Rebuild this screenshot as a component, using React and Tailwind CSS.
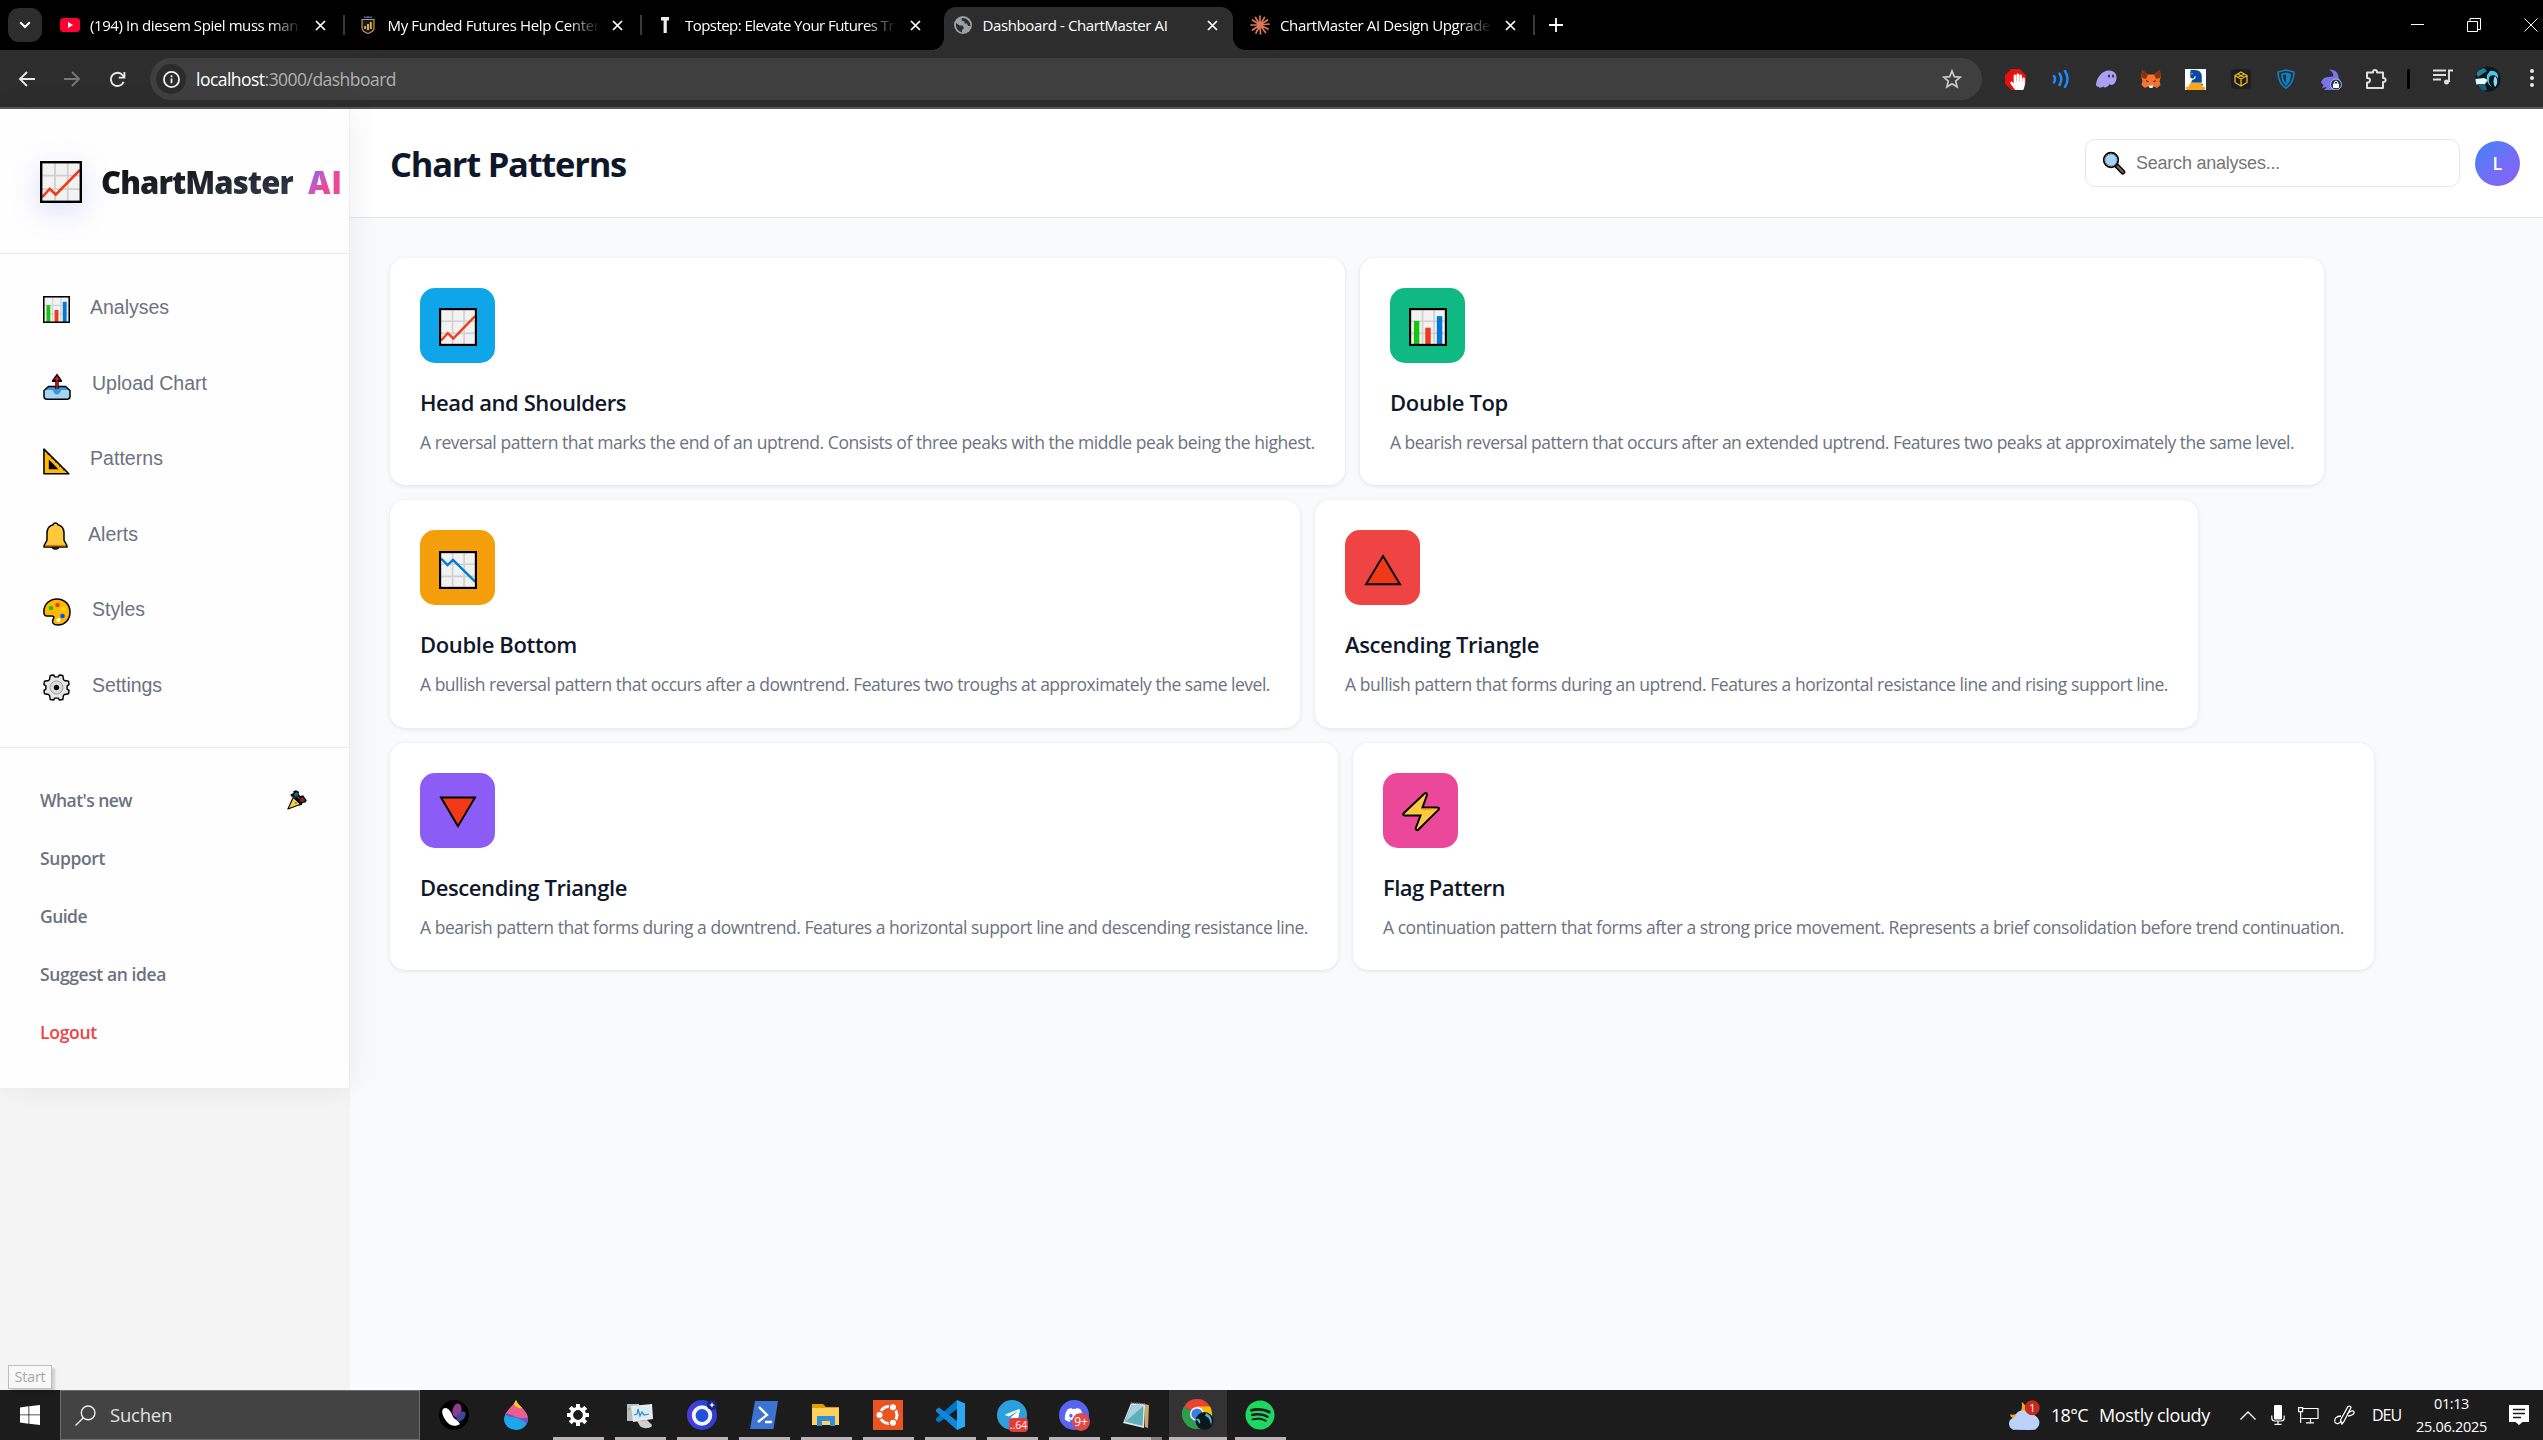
import React, { useLayoutEffect, useRef, useState } from "react";
import { FaDiscord, FaSpotify, FaTelegramPlane, FaHandPaper, FaChessKnight } from "react-icons/fa";

/* Text whose letter spacing is adjusted so that the line takes exactly `w` pixels. */
function Fit({ w, className = "", children }) {
  const ref = useRef(null);
  const [ls, setLs] = useState(0);
  useLayoutEffect(() => {
    const el = ref.current;
    el.style.letterSpacing = "0px";
    const natural = el.getBoundingClientRect().width;
    const n = el.textContent.length;
    setLs((w - natural) / n);
  }, [w]);
  return (
    <span ref={ref} className={"inline-block whitespace-pre " + className} style={{ letterSpacing: ls + "px" }}>
      {children}
    </span>
  );
}

/* ---------- emoji-style drawings ---------- */
const Grid = () => (
  <>
    <rect x="1" y="1" width="26" height="26" fill="#f2f2f2" />
    <path d="M10 1v26M18.5 1v26M1 9.8h26M1 18.7h26" stroke="#d0d0d0" strokeWidth="1.2" />
  </>
);
const Frame = () => <rect x="0.8" y="0.8" width="26.4" height="26.4" fill="none" stroke="#000" strokeWidth="1.6" />;

const ChartUp = ({ className }) => (
  <svg viewBox="0 0 28 28" className={className}>
    <Grid />
    <path d="M1.6 24 6.5 18.5l4 4L26.6 6" fill="none" stroke="#f03a17" strokeWidth="1.7" />
    <Frame />
  </svg>
);
const ChartDown = ({ className }) => (
  <svg viewBox="0 0 28 28" className={className}>
    <Grid />
    <path d="M1.6 5.6 6.3 10.4l4-3.8L26.6 22.6" fill="none" stroke="#0078d7" strokeWidth="1.7" />
    <Frame />
  </svg>
);
const Bars = ({ className }) => (
  <svg viewBox="0 0 28 28" className={className}>
    <Grid />
    <path d="M3.6 9.5h4V27h-4z" fill="#16c60c" />
    <path d="M12 14.5h4V27h-4z" fill="#f03a17" />
    <path d="M20.5 6h4v21h-4z" fill="#0078d7" />
    <Frame />
  </svg>
);
const Upload = ({ className }) => (
  <svg viewBox="0 0 28 28" className={className}>
    <path d="M5.5 13.5h17l4.500 4v5.800a3 3 0 0 1-3 3h-20a3 3 0 0 1-3-3v-5.800z" fill="#a9d3f2" />
    <path d="M5.5 13.5h17l4.500 3.500H18.500c-1 0-1 4.500-4.500 4.500s-3.500-4.500-4.500-4.500H1z" fill="#3a96dd" />
    <path d="M5.5 13.500h17l4.500 4v5.800a3 3 0 0 1-3 3H4a3 3 0 0 1-3-3v-5.800z" fill="none" stroke="#000" strokeWidth="1.5" />
    <path d="M14 .5 9.100 7.300v1.700h3.200v7h3.400V9h3.200V7.300z" fill="#000" />
    <path d="M14 2.800 11.3 7h1.900v9h1.600V7h1.900z" fill="#e81224" />
  </svg>
);
const Ruler = ({ className }) => (
  <svg viewBox="0 0 28 28" className={className}>
    <path d="M1 1.200v25.500h25.800z" fill="#ffb900" stroke="#000" strokeWidth="1.6" strokeLinejoin="round" />
    <path d="M6 12v10h10z" fill="#000" />
    <path d="M5 7l1.500-1.500M9 11l1.500-1.500M13 15l1.500-1.500M17 19l1.500-1.500M21 23l1.500-1.500" stroke="#000" strokeWidth="1.2" />
  </svg>
);
const Bell = ({ className }) => (
  <svg viewBox="0 0 25 28" className={className}>
    <path d="M9 24h7c0 4-7 4-7 0z" fill="#8e562e" stroke="#000" strokeWidth="1.3" />
    <path
      d="M12.500 1c1.500 0 2.100.8 2.500 1.800 4 1 6 4.300 6 8.500V18c0 1.500 3 3.500 3 7H1c0-3.500 3-5.500 3-7v-6.700c0-4.200 2-7.500 6-8.500.4-1 1-1.800 2.500-1.800z"
      fill="#ffc83d"
      stroke="#000"
      strokeWidth="1.5"
    />
    <path d="M2 23.600h21" stroke="#d67d00" strokeWidth="1.4" />
  </svg>
);
const Palette = ({ className }) => (
  <svg viewBox="0 0 28 28" className={className}>
    <path
      d="M14 .9c7.500 0 13 5.600 13 13S22 27 15 27c-5 0-6.500-3-5-5.500 1.300-2.200 1.300-3.500-1-3.500H3.500C1.500 18 .9 16 .9 13.500.9 6.500 6.500.9 14 .9z"
      fill="#ffb900"
      stroke="#000"
      strokeWidth="1.5"
    />
    <circle cx="8" cy="10" r="2.3" fill="#16c60c" />
    <circle cx="14.5" cy="7" r="2.3" fill="#f03a17" />
    <circle cx="20.5" cy="11" r="2.3" fill="#ffdb00" />
    <circle cx="19.5" cy="18" r="2.3" fill="#0052f0" />
    <circle cx="15.5" cy="22" r="2" fill="#fff" />
  </svg>
);
const GearEmoji = ({ className }) => (
  <svg viewBox="0 0 28 28" className={className}>
    <path
      d="M7.500 1.500 11 1l1.200 2h3.600L17 1l3.500.5.700 4.200 1.100 1.100 4.200.7.500 3.500-2 1.200v3.600l2 1.200-.5 3.500-4.200.7-1.100 1.100-.7 4.200L17 27l-1.200-2h-3.600L11 27l-3.500-.5-.7-4.200-1.100-1.100-4.200-.7L1 17l2-1.200v-3.600L1 11l.5-3.500 4.200-.7 1.100-1.100z"
      fill="#e6e6e6"
      stroke="#000"
      strokeWidth="1.5"
      strokeLinejoin="round"
    />
    <circle cx="14" cy="14" r="6.700" fill="#dcdcdc" stroke="#9a9a9a" strokeWidth="1" />
    <circle cx="14" cy="14" r="2.800" fill="#000" />
  </svg>
);
const Party = ({ className }) => (
  <svg viewBox="0 0 20 20" className={className}>
    <path d="M3.500 4.500 6.500 3l-.3-1.700L9 .3l3 1.500-.3 2.200L13.200 6l3-.8 1.300 2 2.300 3-1.300 2.300-3 .5L15 15l-3 .5-5-8.500-3-.5z" fill="#0a0a0a" />
    <path d="M7 4.200 9.300 2l2 1.700-.8 2.500-2.800.6z" fill="#12687d" />
    <path d="M13 8.500l3-1.500 2.500 3.500-3 1.500-2.500-.7z" fill="#8f1f1f" />
    <path d="M10.500 6.500l2 2" stroke="#5b3fb0" strokeWidth="1.2" />
    <path d="M.9 19 6.300 7.300l7.500 7z" fill="#ffc83d" stroke="#000" strokeWidth="1.1" strokeLinejoin="round" />
    <circle cx="8.8" cy="13" r="1" fill="#00b7a8" />
  </svg>
);
const TriUp = ({ className }) => (
  <svg viewBox="0 0 38 38" className={className}>
    <path d="M19 5 36 33.200H2z" fill="#f03a17" stroke="#000" strokeWidth="1.9" />
  </svg>
);
const TriDown = ({ className }) => (
  <svg viewBox="0 0 38 38" className={className}>
    <path d="M19 33.200 2 4.500h34z" fill="#f03a17" stroke="#000" strokeWidth="1.9" />
  </svg>
);
const Bolt = ({ className }) => (
  <svg viewBox="0 0 38 38" className={className}>
    <path
      d="M22.500.5c1.500-1 3 0 2.500 1.500L20.500 14.500h15c1.800 0 2 1.500.8 2.400L16.500 36.500c-1.500 1.300-3.200.3-2.700-1.500l4.700-12.500H2.700c-1.800 0-2-1.500-.8-2.500z"
      fill="#ffc83d"
      stroke="#000"
      strokeWidth="2"
    />
    <path d="M20 15.800h13" stroke="#d67d00" strokeWidth="1.3" />
  </svg>
);
const Lens = ({ className }) => (
  <svg viewBox="0 0 24 24" className={className}>
    <path d="M14.5 14.5 20.800 21" stroke="#000" strokeWidth="5" strokeLinecap="round" />
    <path d="M15.5 15.5 20.800 21" stroke="#666" strokeWidth="2.200" strokeLinecap="round" />
    <circle cx="9" cy="9" r="7.300" fill="#a5d2f5" stroke="#000" strokeWidth="1.700" />
    <circle cx="9" cy="9" r="5.800" fill="none" stroke="#8a9aa6" strokeWidth="1" />
  </svg>
);

/* ---------- browser chrome ---------- */
const X = ({ s = 11 }) => (
  <svg viewBox="0 0 11 11" width={s} height={s}>
    <path d="M1 1l9 9M10 1l-9 9" stroke="#fff" strokeWidth="1.700" />
  </svg>
);
const YouTube = () => (
  <svg viewBox="0 0 20 14" width="20" height="14">
    <rect width="20" height="14" rx="3.500" fill="#ff0033" />
    <path d="M8 4v6l5-3z" fill="#fff" />
  </svg>
);
const Shield = () => (
  <svg viewBox="0 0 14 18" width="14" height="18">
    <path d="M3 0l2 1L7 0l2 1 2-1v2H3z" fill="#2f6fd0" />
    <path d="M1 3.500h12V12c0 3-3 4.500-6 5.500C4 16.500 1 15 1 12z" fill="#17191f" stroke="#c9963c" strokeWidth="1.200" />
    <path d="M4.200 13v-3M7 14V8M9.800 13V6" stroke="#e6b04a" strokeWidth="1.900" />
  </svg>
);
const Topstep = () => (
  <svg viewBox="0 0 8 16" width="8" height="16">
    <path d="M0 0h8v3.500H5.800V16H2.600V3.500H0z" fill="#eee" />
  </svg>
);
const Globe = () => (
  <svg viewBox="0 0 18 18" width="18" height="18">
    <circle cx="9" cy="9" r="9" fill="#9aa0a6" />
    <path d="M2 7l3.500 2.500h3L10 12l-2 2v2.500A8 8 0 0 1 2 7zM8 2l-.5 2.500 3 1v2h2.500l1 2.500h2.500A8 8 0 0 0 8 2z" fill="#2d2d2d" />
  </svg>
);
const Burst = () => (
  <svg viewBox="0 0 20 20" width="20" height="20">
    <path
      d="M10 10V1M10 10l4.500-7.500M10 10l7.500-5M10 10l9-1M10 10l8 4M10 10l5.500 7.500M10 10l.5 9M10 10l-4 8M10 10l-7.500 5M10 10H1M10 10L2.500 5M10 10L5.500 2.500"
      stroke="#d97757"
      strokeWidth="1.700"
      strokeLinecap="round"
    />
  </svg>
);

const tabs = [
  { icon: <YouTube />, text: "(194) In diesem Spiel muss man", w: 208, fade: true, line: true },
  { icon: <Shield />, text: "My Funded Futures Help Center", w: 212, fade: true, line: true },
  { icon: <Topstep />, text: "Topstep: Elevate Your Futures Tr", w: 209, fade: true },
  { icon: <Globe />, text: "Dashboard - ChartMaster AI", w: 185, active: true },
  { icon: <Burst />, text: "ChartMaster AI Design Upgrade", w: 210, fade: true, line: true },
];

function Tab({ t }) {
  return (
    <div className="relative flex h-[50px] w-[297.5px] shrink-0 items-center">
      {t.active && (
        <div className="absolute top-[7px] bottom-0 left-[4px] right-[4px] rounded-t-[12px] bg-[#2d2d2d]">
          <div className="absolute bottom-0 -left-[12px] size-[12px] bg-[radial-gradient(circle_at_0_0,transparent_11.5px,#2d2d2d_12px)]" />
          <div className="absolute bottom-0 -right-[12px] size-[12px] bg-[radial-gradient(circle_at_100%_0,transparent_11.5px,#2d2d2d_12px)]" />
        </div>
      )}
      <div className="relative ml-[13px] flex w-5 justify-center">{t.icon}</div>
      <div
        className={
          "relative ml-[10px] w-[214px] text-[15px] leading-6 text-white " +
          (t.fade ? "[mask-image:linear-gradient(to_right,#000_84%,transparent_99%)]" : "")
        }
      >
        <Fit w={t.w}>{t.text}</Fit>
      </div>
      <div className="relative ml-[10px] flex w-3 justify-center">
        <X />
      </div>
      {t.line && <div className="absolute right-0 h-5 w-[2px] bg-[#3a3a3a]" />}
    </div>
  );
}

const extensions = [
  <svg viewBox="0 0 20 20" width="21" height="21">
    <path d="M6 0h8l6 6v8l-6 6H6l-6-6V6z" fill="#e8110f" />
    <FaHandPaper x="4" y="4" width="12" height="12" color="#fff" />
  </svg>,
  <svg viewBox="0 0 18 18" width="18" height="18" fill="none" stroke="#1a8cff" strokeWidth="2.500" strokeLinecap="round">
    <path d="M2 6q2 3 0 6.500M7.500 3.500q3.500 5.500 0 11.500M13 1q5 8 0 16" />
  </svg>,
  <svg viewBox="0 0 22 18" width="22" height="18">
    <path
      d="M1 14C2 7 7 .5 14 .5c5 0 7.500 3 7.500 7 0 4.500-2.500 7.500-5 7.500-1.500 0-2-1-2-1-1 2-3 3.500-4.500 3.500-1.500 0-1.500-1.300-1.500-1.300S7 17.700 5 17.700c-1.300 0-1.500-1.200-1.500-1.200S1 17.500 1 14z"
      fill="#ab9ff2"
    />
    <ellipse cx="14" cy="6" rx="1" ry="1.500" fill="#2d2d2d" />
    <ellipse cx="18" cy="6" rx="1" ry="1.500" fill="#2d2d2d" />
  </svg>,
  <svg viewBox="0 0 20 19" width="20" height="21">
    <path d="M1 0l6 4.500h6L19 0l.5 8-1 3 1 4-3.500 3-3-1.500h-6L4 18 .5 15l1-4-1-3z" fill="#f6752c" />
    <path d="M1 0l6 4.500L5 9 1 8zM19 0l-6 4.500L15 9l4-1z" fill="#8c3212" />
    <path d="M5 10l3 1.500-2 .8zM15 10l-3 1.500 2 .8z" fill="#222" />
    <path d="M7.500 15.500h5l-1 2.500h-3z" fill="#eee" />
  </svg>,
  <svg viewBox="0 0 20 20" width="21" height="21">
    <rect width="20" height="20" fill="#fff" />
    <FaChessKnight x="3" y="0" width="14" height="16" color="#0b4a9e" />
    <path d="M5 13h10l1.500 4H19v3H1v-3h2.500z" fill="#f8a71b" />
  </svg>,
  <svg viewBox="0 0 20 20" width="20" height="20">
    <rect width="20" height="20" rx="4" fill="#1b1e25" />
    <path d="M10 3l6 3.500v7L10 17l-6-3.500v-7zM4 6.500l6 3.500 6-3.500M10 10v7M7 5l6 3.500M13 5L7 8.500" fill="none" stroke="#f0b90b" strokeWidth="1.300" />
  </svg>,
  <svg viewBox="0 0 18 20" width="18" height="20" fill="none" stroke="#0b84c6">
    <path d="M9 1l8 2c0 8-2 12.500-8 16C3 15.500 1 11 1 3z" strokeWidth="1.600" />
    <path d="M9 4.500l4 1c0 5-1 7.500-4 10-3-2.500-4-5-4-10z" strokeWidth="1.800" />
    <path d="M9 4.500v11c3-2.500 4-5 4-10z" fill="#0b84c6" stroke="none" />
  </svg>,
  <svg viewBox="0 0 21 21" width="21" height="21">
    <path d="M8 .5c6-.5 10 4 9.500 8L20 13l-4 8H3l3-3-5 1 1.500-3L0 13.500C1.500 8.500 5 8 12 7.500 13 5 11 2.500 8 .5z" fill="#7b74e8" />
    <circle cx="15" cy="15.500" r="5.500" fill="#2b3550" stroke="#cfd3ea" strokeWidth=".8" />
    <rect x="12" y="14.500" width="6" height="4.500" rx=".8" fill="#fff" />
    <path d="M13.500 14.500V13q1.500-2 3 0v1.500" fill="none" stroke="#fff" strokeWidth="1" />
  </svg>,
  <svg viewBox="0 0 22 22" width="22" height="22" fill="none" stroke="#dedede" strokeWidth="2">
    <path d="M2 4.500h6C7.500 1 12.500 1 12 4.500h6V10c3.500-.5 3.500 4.500 0 4v6H2v-5.500c4 .5 4-5 0-4.500z" strokeLinejoin="round" />
  </svg>,
];

function Browser() {
  return (
    <div className="h-[109px] w-full shrink-0">
      <div className="flex h-[50px] items-center bg-black pl-2">
        <div className="mr-[5px] flex size-[34px] shrink-0 items-center justify-center rounded-[11px] bg-[#2d2d2d]">
          <svg viewBox="0 0 12 8" width="12" height="8">
            <path d="M1.200 1.200 6 6l4.800-4.800" fill="none" stroke="#fff" strokeWidth="2" />
          </svg>
        </div>
        {tabs.map((t) => (
          <Tab key={t.text} t={t} />
        ))}
        <svg viewBox="0 0 14 14" width="14" height="14" className="ml-[14px]">
          <path d="M7 0v14M0 7h14" stroke="#fff" strokeWidth="1.800" />
        </svg>
        <div className="ml-auto flex items-center gap-[43px] pr-[5px]">
          <svg viewBox="0 0 13 13" width="13" height="13">
            <path d="M0 5.500h13" stroke="#fff" />
          </svg>
          <svg viewBox="0 0 14 14" width="14" height="14" fill="none" stroke="#fff">
            <path d="M.5 3.500h10v10H.5zM3 3.500V.5h10.500v11H10.500" />
          </svg>
          <svg viewBox="0 0 14 14" width="14" height="14">
            <path d="M.5.5l13 13M13.500.5l-13 13" stroke="#fff" />
          </svg>
        </div>
      </div>
      <div className="flex h-[59px] items-center border-b-2 border-[#5a5757] bg-[#2d2d2d] pt-px pl-[18px]">
        <svg viewBox="0 0 18 16" width="18" height="16" fill="none" stroke="#e8e8e8" strokeWidth="1.900">
          <path d="M17 8H2M9 1L2 8l7 7" />
        </svg>
        <svg viewBox="0 0 18 16" width="18" height="16" className="ml-[27px]" fill="none" stroke="#777" strokeWidth="1.900">
          <path d="M1 8h15M9 1l7 7-7 7" />
        </svg>
        <svg viewBox="0 0 18 18" width="17" height="17" className="ml-[28px]" fill="none" stroke="#e8e8e8" strokeWidth="2">
          <path d="M15.500 11.500A7 7 0 1 1 14.500 4.500L16 6.500M16.300 1v6h-6" />
        </svg>
        <div className="ml-[24px] flex h-[42px] w-[1832px] shrink-0 items-center rounded-full bg-[#3f3f3f] pr-5 pl-[6px]">
          <div className="flex size-[30px] items-center justify-center rounded-full bg-[#2b2b2b]">
            <svg viewBox="0 0 18 18" width="17" height="17" fill="none" stroke="#f1f1f1" strokeWidth="1.900">
              <circle cx="9" cy="9" r="8" />
              <path d="M9 8v5M9 4.500v2" />
            </svg>
          </div>
          <div className="ml-[10px] text-[17.5px] leading-7 text-[#b0b0b0]">
            <Fit w={200}>
              <span className="text-white">localhost</span>:3000/dashboard
            </Fit>
          </div>
          <svg viewBox="0 0 20 20" width="20" height="20" className="ml-auto" fill="none" stroke="#c9c9c9" strokeWidth="1.700">
            <path d="M10 2l2.300 5.600 6 .5-4.600 3.900 1.400 5.900-5.100-3.200-5.100 3.200 1.400-5.900L1.700 8.100l6-.5z" />
          </svg>
        </div>
        <div className="ml-[11px] flex shrink-0">
          {extensions.map((e, i) => (
            <div key={i} className="flex w-[45.1px] items-center justify-center">
              {e}
            </div>
          ))}
        </div>
        <div className="ml-[8px] h-5 w-[3px] rounded bg-black" />
        <svg viewBox="0 0 20 16" width="20" height="16" className="mb-1 ml-[23px]" fill="none" stroke="#dedede" strokeWidth="1.900">
          <path d="M0 1.500h13M0 6h13M0 10.500h8M20 1.500h-4V13" />
          <circle cx="13.500" cy="13" r="2.500" fill="#dedede" stroke="none" />
        </svg>
        <svg viewBox="0 0 26 26" width="26" height="26" className="ml-[22px]">
          <defs>
            <clipPath id="avatar">
              <circle cx="13" cy="13" r="12.600" />
            </clipPath>
          </defs>
          <g clipPath="url(#avatar)">
            <rect width="26" height="26" fill="#0b171c" />
            <path d="M0 6l9-4 3 3-9 6z" fill="#2a7f97" />
            <path d="M0 13l9-1 4 2-3 4-9 1z" fill="#e9f6f8" />
            <path d="M2 18l8 0 2 6-5 1z" fill="#1c5f73" />
            <path d="M15 5c6-1 9 3 8 8-1-3-4-5-8-3-2 4-1 8 2 11-4-2-6-7-5-12z" fill="#4cc3df" />
            <path d="M20 10c3 3 3 8 0 11-2-3-2-8 0-11z" fill="#8fdbe9" />
          </g>
        </svg>
        <svg viewBox="0 0 4 18" width="4" height="18" className="mb-[2px] ml-[29px]" fill="#e8e8e8">
          <circle cx="2" cy="2" r="2" />
          <circle cx="2" cy="9" r="2" />
          <circle cx="2" cy="16" r="2" />
        </svg>
      </div>
    </div>
  );
}

/* ---------- application ---------- */
const nav = [
  { icon: <Bars className="mt-px size-[27px]" />, text: "Analyses", w: 79, ml: "ml-[20px]" },
  { icon: <Upload className="mt-1 size-[28px]" />, text: "Upload Chart", w: 115, ml: "ml-[21px] mt-px" },
  { icon: <Ruler className="mt-[3px] size-[27px]" />, text: "Patterns", w: 73, ml: "ml-[20px]" },
  { icon: <Bell className="h-[28px] w-[25px]" />, text: "Alerts", w: 50, ml: "ml-[20px]" },
  { icon: <Palette className="size-[28px]" />, text: "Styles", w: 53, ml: "ml-[21px]" },
  { icon: <GearEmoji className="size-[27px]" />, text: "Settings", w: 70, ml: "ml-[22px]" },
];

const links = [
  { text: "What's new", w: 92, icon: true },
  { text: "Support", w: 65 },
  { text: "Guide", w: 47 },
  { text: "Suggest an idea", w: 126 },
  { text: "Logout", w: 57, red: true },
];

function Sidebar() {
  return (
    <aside className="relative z-10 h-[979px] w-[350px] shrink-0 border-r border-[#ececee] bg-[#fefefe] shadow-[4px_0_30px_rgba(0,0,0,0.06)]">
      <div className="flex h-[145px] items-center border-b border-[#ececee] pt-[2px] pl-10">
        <ChartUp className="size-[42px] shrink-0 drop-shadow-[0_8px_14px_rgba(99,102,241,0.22)]" />
        <div className="ml-[19px] flex text-[31px] leading-10 font-extrabold">
          <div className="bg-linear-to-br from-[#0a0a0a] to-[#374151] bg-clip-text text-transparent">
            <Fit w={192}>ChartMaster</Fit>
          </div>
          <div className="ml-[15px] bg-linear-to-br from-[#8b5cf6] from-15% to-[#ec4899] to-55% bg-clip-text text-transparent">
            <Fit w={35}>AI</Fit>
          </div>
        </div>
      </div>
      <nav className="flex h-[494px] flex-col border-b border-[#ececee] pt-[15px] pl-[43px] font-['Liberation_Sans',sans-serif] text-[19.5px] text-[#6b7280]">
        {nav.map((n) => (
          <div key={n.text} className="flex h-[75.6px] items-center">
            <div className="mt-[5px] shrink-0">{n.icon}</div>
            <Fit w={n.w} className={n.ml + " leading-6"}>
              {n.text}
            </Fit>
          </div>
        ))}
      </nav>
      <div className="flex flex-col pt-[23px] pl-10">
        {links.map((l) => (
          <div
            key={l.text}
            className={"flex h-[58px] items-center text-[17.5px] font-semibold " + (l.red ? "text-[#ef4444]" : "text-[#6b7280]")}
          >
            <Fit w={l.w}>{l.text}</Fit>
            {l.icon && <Party className="mr-[42px] ml-auto size-5" />}
          </div>
        ))}
      </div>
    </aside>
  );
}

const rows = [
  [
    { title: "Head and Shoulders", tw: 206, w: 895, card: "w-[955px]", bg: "bg-[#0ea5e9]", icon: <ChartUp className="size-[38px]" />, text: "A reversal pattern that marks the end of an uptrend. Consists of three peaks with the middle peak being the highest." },
    { title: "Double Top", tw: 118, w: 904, card: "w-[964px]", bg: "bg-[#10b981]", icon: <Bars className="size-[38px]" />, text: "A bearish reversal pattern that occurs after an extended uptrend. Features two peaks at approximately the same level." },
  ],
  [
    { title: "Double Bottom", tw: 157, w: 850, card: "w-[910px]", bg: "bg-[#f59e0b]", icon: <ChartDown className="size-[38px]" />, text: "A bullish reversal pattern that occurs after a downtrend. Features two troughs at approximately the same level." },
    { title: "Ascending Triangle", tw: 194, w: 823, card: "w-[883px]", bg: "bg-[#ef4444]", icon: <TriUp className="size-[38px]" />, text: "A bullish pattern that forms during an uptrend. Features a horizontal resistance line and rising support line." },
  ],
  [
    { title: "Descending Triangle", tw: 207, w: 888, card: "w-[948px]", bg: "bg-[#8b5cf6]", icon: <TriDown className="size-[38px]" />, text: "A bearish pattern that forms during a downtrend. Features a horizontal support line and descending resistance line." },
    { title: "Flag Pattern", tw: 122, w: 961, card: "w-[1021px]", bg: "bg-[#ec4899]", icon: <Bolt className="size-[38px] overflow-visible" />, text: "A continuation pattern that forms after a strong price movement. Represents a brief consolidation before trend continuation." },
  ],
];

function Card({ c }) {
  return (
    <div className={"h-[227.5px] rounded-[15px] bg-white p-[30px] shadow-[0_1px_4px_rgba(0,0,0,0.1)] " + c.card}>
      <div className={"flex size-[75px] items-center justify-center rounded-[15px] pt-[4px] " + c.bg}>{c.icon}</div>
      <h3 className="mt-[24px] text-[22px] leading-[30px] font-semibold text-[#0f172a]">
        <Fit w={c.tw}>{c.title}</Fit>
      </h3>
      <p className="mt-[12px] text-[17.5px] leading-[27px] text-[#6b7280]">
        <Fit w={c.w}>{c.text}</Fit>
      </p>
    </div>
  );
}

function Main() {
  return (
    <main className="flex-1 bg-[#f9fafc]">
      <header className="flex h-[109px] items-center border-b border-[#e2e4e8] bg-white pr-[23px] pl-10">
        <h1 className="pt-[2px] text-[34.5px] leading-[44px] font-bold text-[#0f172a]">
          <Fit w={236}>Chart Patterns</Fit>
        </h1>
        <div className="ml-auto flex h-[48px] w-[375px] items-center rounded-[10px] border border-[#e5e7eb] bg-white pl-4">
          <Lens className="size-6" />
          <span className="ml-[10px] font-['Liberation_Sans',sans-serif] text-[18px] text-[#757575]">
            <Fit w={144}>Search analyses...</Fit>
          </span>
        </div>
        <div className="ml-[15px] flex size-[45px] items-center justify-center rounded-full bg-linear-to-br from-[#3b82f6] to-[#8b5cf6] text-[18px] font-semibold text-white">
          L
        </div>
      </header>
      <div className="flex flex-col gap-[15px] pt-[39.5px] pl-10">
        {rows.map((r, i) => (
          <div key={i} className="flex gap-[15px]">
            {r.map((c) => (
              <Card key={c.title} c={c} />
            ))}
          </div>
        ))}
      </div>
    </main>
  );
}

/* ---------- taskbar ---------- */
const Cog = () => {
  const a = [0, 45, 90, 135, 180, 225, 270, 315];
  return (
    <svg viewBox="0 0 24 24" width="24" height="24">
      {a.map((d) => (
        <rect key={d} x="10" y="1" width="4" height="6" fill="#fff" transform={`rotate(${d} 12 12)`} />
      ))}
      <circle cx="12" cy="12" r="6.500" fill="none" stroke="#fff" strokeWidth="3.200" />
    </svg>
  );
};

const apps = [
  {
    icon: (
      <svg viewBox="0 0 30 30" width="30" height="30">
        <circle cx="15" cy="15" r="15" fill="#000" />
        <ellipse cx="18" cy="10.500" rx="4.500" ry="7" fill="#8e3b94" transform="rotate(12 18 10.500)" />
        <ellipse cx="22" cy="16.500" rx="3.500" ry="6" fill="#3b459c" transform="rotate(40 22 16.500)" />
        <path d="M4 9c4-3 8 2 10 8 2 2 6 5 7 7-4 3-10 2-13-2C4 17 2 12 4 9z" fill="#fff" />
      </svg>
    ),
  },
  {
    icon: (
      <svg viewBox="0 0 24 30" width="24" height="30">
        <defs>
          <clipPath id="drop">
            <path d="M12 0c2 6 12 11 12 19a12 11 0 0 1-24 0C0 12 10 6 12 0z" />
          </clipPath>
        </defs>
        <g clipPath="url(#drop)">
          <rect width="24" height="30" fill="#1da7ea" />
          <path d="M0 13c6 8 12 0 24 12V8H0z" fill="#7b52c4" />
          <path d="M0 15C6 10 13 22 24 17V4H0z" fill="#ef5f8d" />
          <path d="M9 0c0 7 8 9 9 8V0z" fill="#ffcf00" />
        </g>
      </svg>
    ),
  },
  { icon: <Cog />, open: true },
  {
    icon: (
      <svg viewBox="0 0 28 28" width="28" height="28">
        <path d="M1 3h12v17H1z" fill="#b9bcbd" />
        <path d="M5 5l21-2 1 15-20 3z" fill="#e8ecee" />
        <path d="M7 7l17-1.500.7 10.500L8.500 18z" fill="#d7ecfb" />
        <path d="M8 14l3-1 1-5 2 7 2-4 2 3 5-1" fill="none" stroke="#3b86c4" strokeWidth="1.200" />
        <path d="M11 20l10-1 5 5c0 4-10 4-12 1z" fill="#cfcfcf" />
        <circle cx="3" cy="8" r="1" fill="#5c4" />
      </svg>
    ),
    open: true,
  },
  {
    icon: (
      <svg viewBox="0 0 30 30" width="30" height="30">
        <defs>
          <linearGradient id="ring" x1="0" x2="1">
            <stop offset="0" stopColor="#5a35e0" />
            <stop offset=".5" stopColor="#2548d8" />
            <stop offset="1" stopColor="#3a35d6" />
          </linearGradient>
        </defs>
        <circle cx="15" cy="15" r="15" fill="url(#ring)" />
        <circle cx="15" cy="15.500" r="8.300" fill="#2450d8" stroke="#f3f5ff" strokeWidth="3.800" />
        <circle cx="25" cy="5" r="5" fill="#1a237e" />
        <path d="M25 2l.8 2.200L28 5l-2.200.8L25 8l-.8-2.200L22 5l2.200-.8z" fill="#fff" />
      </svg>
    ),
    open: true,
  },
  {
    icon: (
      <svg viewBox="0 0 28 22" width="28" height="28">
        <path d="M5 -3h23l-4.500 28H0z" fill="#3b74d1" />
        <path d="M9 3l8 8-9 7M15 18h7" fill="none" stroke="#fff" strokeWidth="2.300" />
      </svg>
    ),
    open: true,
  },
  {
    icon: (
      <svg viewBox="0 0 28 24" width="28" height="24">
        <path d="M0 1h11l3 3h13v6H0z" fill="#e0a100" />
        <path d="M0 5h27v17H0z" fill="#ffd25e" />
        <path d="M5 23V13h18v10h-5v-5h-8v5z" fill="#2f8fdd" />
      </svg>
    ),
    open: true,
  },
  {
    icon: (
      <svg viewBox="0 0 30 30" width="30" height="30">
        <rect width="30" height="30" fill="#e95420" />
        <circle cx="15.500" cy="15" r="8.500" fill="none" stroke="#fff" strokeWidth="3" />
        <g fill="#fff" stroke="#e95420" strokeWidth="1.400">
          <circle cx="6.500" cy="15" r="3.700" />
          <circle cx="20" cy="7.200" r="3.700" />
          <circle cx="20" cy="22.800" r="3.700" />
        </g>
      </svg>
    ),
    open: true,
  },
  {
    icon: (
      <svg viewBox="0 0 30 30" width="30" height="30">
        <path d="M22 0v9L4 22.500 1 20.500v-2z" fill="#0078c8" />
        <path d="M22 30v-9L4 7.500 1 9.500v2z" fill="#1087d8" />
        <path d="M22 0l8 3.500v23L22 30z" fill="#2aa9f2" />
      </svg>
    ),
    open: true,
  },
  {
    icon: (
      <div className="relative">
        <div className="flex size-[30px] items-center justify-center rounded-full bg-[#2ba0da]">
          <FaTelegramPlane size={17} color="#fff" />
        </div>
        <div className="absolute top-[18px] left-[12px] flex h-[14px] w-[19px] items-center justify-center rounded-[4px] bg-[#e8393a] text-[10.5px] leading-none text-white">
          ..64
        </div>
      </div>
    ),
    open: true,
  },
  {
    icon: (
      <div className="relative">
        <div className="flex size-[30px] items-center justify-center rounded-full bg-[#5865f2]">
          <FaDiscord size={20} color="#fff" />
        </div>
        <div className="absolute top-[13px] left-[13px] flex size-[18px] items-center justify-center rounded-full bg-[#e0484b] text-[12px] leading-none text-white">
          9+
        </div>
      </div>
    ),
    open: true,
  },
  {
    icon: (
      <svg viewBox="0 0 28 28" width="28" height="28">
        <path d="M22 3l5 1-1 23-3-1z" fill="#c9a86b" />
        <path d="M9 2l14 1-1 24-21-5z" fill="#dfe7ea" />
        <path d="M9.500 4l12 1-1 20-18-4.500z" fill="#5fb0bd" />
        <path d="M9.500 4l12 1-18 15.500z" fill="#a8d3da" />
        <path d="M9 2l14 1" stroke="#777" strokeWidth="1.600" strokeDasharray="1.500 1" />
      </svg>
    ),
    open: true,
    stacked: true,
  },
  {
    icon: (
      <svg viewBox="0 0 32 32" width="32" height="32">
        <path d="M15 15L2 7.500A15 15 0 0 1 28 7.500z" fill="#ea4335" />
        <path d="M15 15V7.500h13A15 15 0 0 1 15 30z" fill="#fbbc04" />
        <path d="M15 15l3 14.700A15 15 0 0 1 2 7.500z" fill="#2e9e4b" />
        <circle cx="15" cy="15" r="7" fill="#fff" />
        <circle cx="15" cy="15" r="5.600" fill="#3b7de8" />
        <circle cx="22.500" cy="22" r="9" fill="#0c171c" />
        <path d="M14 20c3-2 5 2 4 5M24 14c5 2 7 7 5 12-1-5-2-8-6-9z" fill="#48b8d4" />
      </svg>
    ),
    open: true,
    active: true,
  },
  { icon: <FaSpotify size={30} color="#1ed760" />, open: true },
];

function Taskbar() {
  return (
    <div className="relative z-20 flex h-[50px] w-full shrink-0 items-center bg-[#1c1c1c] text-white">
      <div className="absolute -top-[25px] left-[8px] flex h-[24px] w-[44px] items-center justify-center border border-[#bdbdbd] bg-[#f8f8f8] text-[14.5px] leading-none text-[#a9a9a9] shadow-[3px_3px_2px_rgba(0,0,0,0.15)]">
        <Fit w={31}>Start</Fit>
      </div>
      <div className="flex w-[60px] justify-center">
        <svg viewBox="0 0 20 20" width="20" height="20" fill="#fff">
          <path d="M0 2.500l8.500-1.200V9.500H0zM9.300 1.200L20 0v9.500H9.300zM0 10.300h8.500v8.400L0 17.500zM9.300 10.300H20V20L9.300 18.800z" />
        </svg>
      </div>
      <div className="flex h-[50px] w-[360px] items-center border border-[#6e6e6e] bg-[#434343] pl-[14px]">
        <svg viewBox="0 0 20 20" width="21" height="21" fill="none" stroke="#eee" strokeWidth="1.300">
          <circle cx="12.500" cy="7.500" r="6.500" />
          <path d="M8 12.200L.5 19.500" />
        </svg>
        <span className="ml-[14px] text-[18.5px] leading-7 text-[#e2e2e2]">
          <Fit w={62}>Suchen</Fit>
        </span>
      </div>
      <div className="ml-[3px] flex">
        {apps.map((a, i) => (
          <div key={i} className="flex h-[50px] w-[62px] justify-center">
            <div className={"relative flex h-[50px] items-center justify-center " + (a.active ? "w-[58px] bg-[#333]" : "w-[51px]")}>
              {a.icon}
              {a.open && (
                <div className="absolute inset-x-0 bottom-0 flex h-[3px] bg-[#bab4b8]">
                  {a.stacked && <div className="ml-auto w-[11px] bg-[#857f83]" />}
                </div>
              )}
            </div>
          </div>
        ))}
      </div>
      <div className="ml-auto flex items-center pr-[14px]">
        <svg viewBox="0 0 32 32" width="31" height="31">
          <path d="M13 2c2 8-2 14-12 13 1 6 12 6 16 1 3-4 1-11-4-14z" fill="#f5a623" />
          <path d="M7 31a6.500 6.500 0 0 1-1-13 8.500 8.500 0 0 1 16-2.500A7.500 7.500 0 0 1 25 31z" fill="#bcd2fa" />
          <path d="M3 29c3 2 24 3 27 0-2 2-4 2-5 2H7z" fill="#7fa3ee" />
          <circle cx="24" cy="8" r="7.700" fill="#c42b1c" />
          <text x="24" y="12" textAnchor="middle" fontSize="11" fill="#fff">
            1
          </text>
        </svg>
        <span className="ml-[11px] text-[18px] leading-7">
          <Fit w={37}>18°C</Fit>
        </span>
        <span className="ml-[11px] text-[18px] leading-7">
          <Fit w={111}>Mostly cloudy</Fit>
        </span>
        <svg viewBox="0 0 16 9" width="16" height="9" className="ml-[30px]" fill="none" stroke="#fff" strokeWidth="1.400">
          <path d="M.5 8.500L8 1l7.500 7.500" />
        </svg>
        <svg viewBox="0 0 14 20" width="14" height="20" className="ml-[15px]" fill="none" stroke="#fff" strokeWidth="1.200">
          <rect x="3" y="0" width="8" height="14.500" rx="1.200" fill="#fff" stroke="none" />
          <path d="M.8 10.500v2.500q0 3 3 3h6.400q3 0 3-3v-2.500M7 16v3M3.500 19.400h7" />
        </svg>
        <svg viewBox="0 0 21 18" width="21" height="18" className="ml-[13px]" fill="none" stroke="#fff" strokeWidth="1.200">
          <path d="M5 2.500h15v10H3.500M12.500 12.500v4M8 16.800h8M.6 1.600h4v4h-4zM2.600 5.600V17" />
        </svg>
        <svg viewBox="0 0 21 20" width="21" height="20" className="ml-[15px]" fill="none" stroke="#fff" strokeWidth="1.300">
          <path d="M8 19L6.500 15 14 1.500q2.500-1 3 1L10 16.500zM7 11c-5 0-7 3-6 6 1 2.500 5 2 6-1M13 9c3-3 6-4 7-2 .5 2-3 4-6 4" />
        </svg>
        <span className="ml-[17px] text-[16px] leading-6">
          <Fit w={29}>DEU</Fit>
        </span>
        <div className="ml-[15px] flex w-[71px] flex-col items-center text-[14.5px] leading-[23px]">
          <Fit w={35}>01:13</Fit>
          <Fit w={71}>25.06.2025</Fit>
        </div>
        <svg viewBox="0 0 20 20" width="20" height="20" className="ml-[22px]">
          <path d="M0 0h20v17h-6.500L10 20l-3.500-3H0z" fill="#fff" />
          <path d="M4 4.500h12M4 8.500h12M4 12.500h8" stroke="#1c1c1c" strokeWidth="1.300" />
        </svg>
      </div>
    </div>
  );
}

export default function App() {
  return (
    <div className="flex h-[1440px] w-[2543px] flex-col overflow-hidden bg-[#f4f4f4] font-['Open_Sans','Noto_Sans',sans-serif]">
      <Browser />
      <div className="flex h-[1281px] shrink-0">
        <Sidebar />
        <Main />
      </div>
      <Taskbar />
    </div>
  );
}
